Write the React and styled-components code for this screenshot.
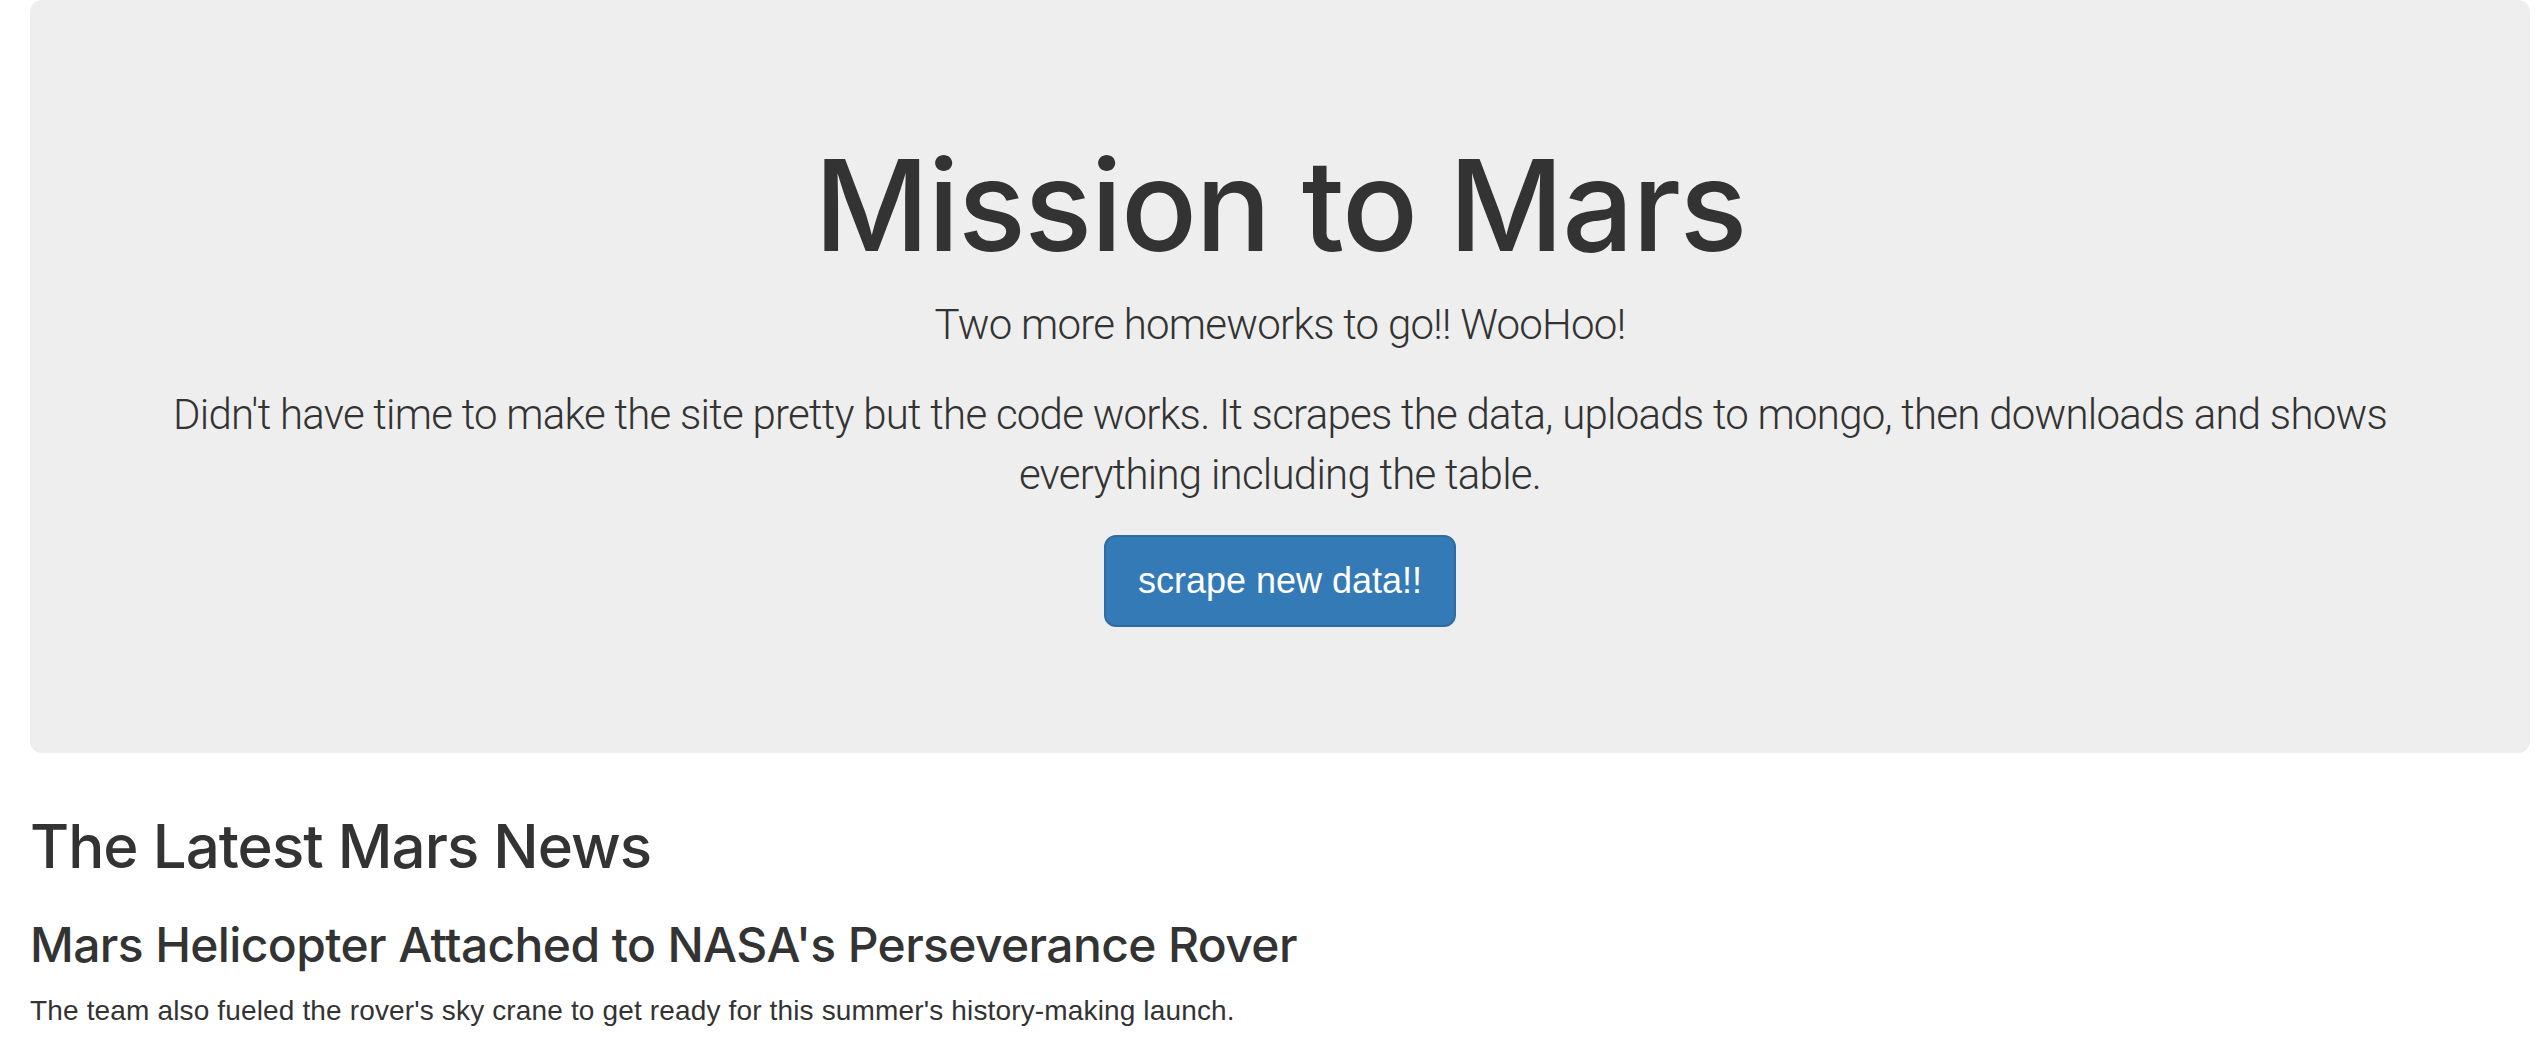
import React from "react";
import styled, { createGlobalStyle } from "styled-components";

const GlobalStyle = createGlobalStyle`
  html, body {
    margin: 0;
    padding: 0;
    background: #ffffff;
  }
  body {
    font-family: "Liberation Sans", Arial, Helvetica, sans-serif;
    font-size: 28px;
    line-height: 1.42857;
    color: #333333;
  }
  * {
    box-sizing: border-box;
  }
`;

const headingFont = `"Inter", "Liberation Sans", Arial, sans-serif`;

const Container = styled.div`
  padding: 0 18px 0 30px;
`;

const Jumbotron = styled.div`
  background-color: #eeeeee;
  border-radius: 12px;
  padding: 96px 120px;
  margin-bottom: 60px;
  text-align: center;
`;

const Title = styled.h1`
  font-family: ${headingFont};
  font-size: 126px;
  font-weight: 500;
  letter-spacing: -0.012em;
  line-height: 1.1;
  margin: 40px 0 20px;
  color: #333333;
`;

const Lead = styled.p`
  font-family: "Roboto", "Liberation Sans", sans-serif;
  font-size: 42px;
  font-weight: 300;
  letter-spacing: -0.75px;
  line-height: 60px;
  margin: 0 0 30px;
  color: #333333;
`;

const ScrapeButton = styled.a`
  display: inline-block;
  padding: 20px 32px;
  font-family: "Liberation Sans", Arial, sans-serif;
  font-size: 36px;
  font-weight: 400;
  letter-spacing: 0;
  line-height: 48px;
  border-radius: 12px;
  border: 2px solid #2e6da4;
  background-color: #337ab7;
  color: #ffffff;
  text-decoration: none;
  cursor: pointer;
  vertical-align: middle;
`;

const SectionTitle = styled.h2`
  font-family: ${headingFont};
  font-size: 60px;
  font-weight: 500;
  letter-spacing: -0.016em;
  line-height: 1.1;
  margin: 40px 0 20px;
`;

const NewsTitle = styled.h3`
  font-family: ${headingFont};
  font-size: 48px;
  font-weight: 500;
  letter-spacing: -0.013em;
  line-height: 1.1;
  margin: 40px 0 20px;
`;

const NewsBody = styled.p`
  font-size: 28px;
  letter-spacing: 0.15px;
  line-height: 40px;
  margin: 0 0 20px;
`;

const App = () => {
  return (
    <>
      <GlobalStyle />
      <Container>
        <Jumbotron>
          <Title>Mission to Mars</Title>
          <Lead>Two more homeworks to go!! WooHoo!</Lead>
          <Lead>
            Didn't have time to make the site pretty but the code works. It scrapes the data, uploads to
            mongo, then downloads and shows everything including the table.
          </Lead>
          <Lead>
            <ScrapeButton href="#" role="button">scrape new data!!</ScrapeButton>
          </Lead>
        </Jumbotron>
        <SectionTitle>The Latest Mars News</SectionTitle>
        <NewsTitle>Mars Helicopter Attached to NASA's Perseverance Rover</NewsTitle>
        <NewsBody>The team also fueled the rover's sky crane to get ready for this summer's history-making launch.</NewsBody>
      </Container>
    </>
  );
};

export default App;
